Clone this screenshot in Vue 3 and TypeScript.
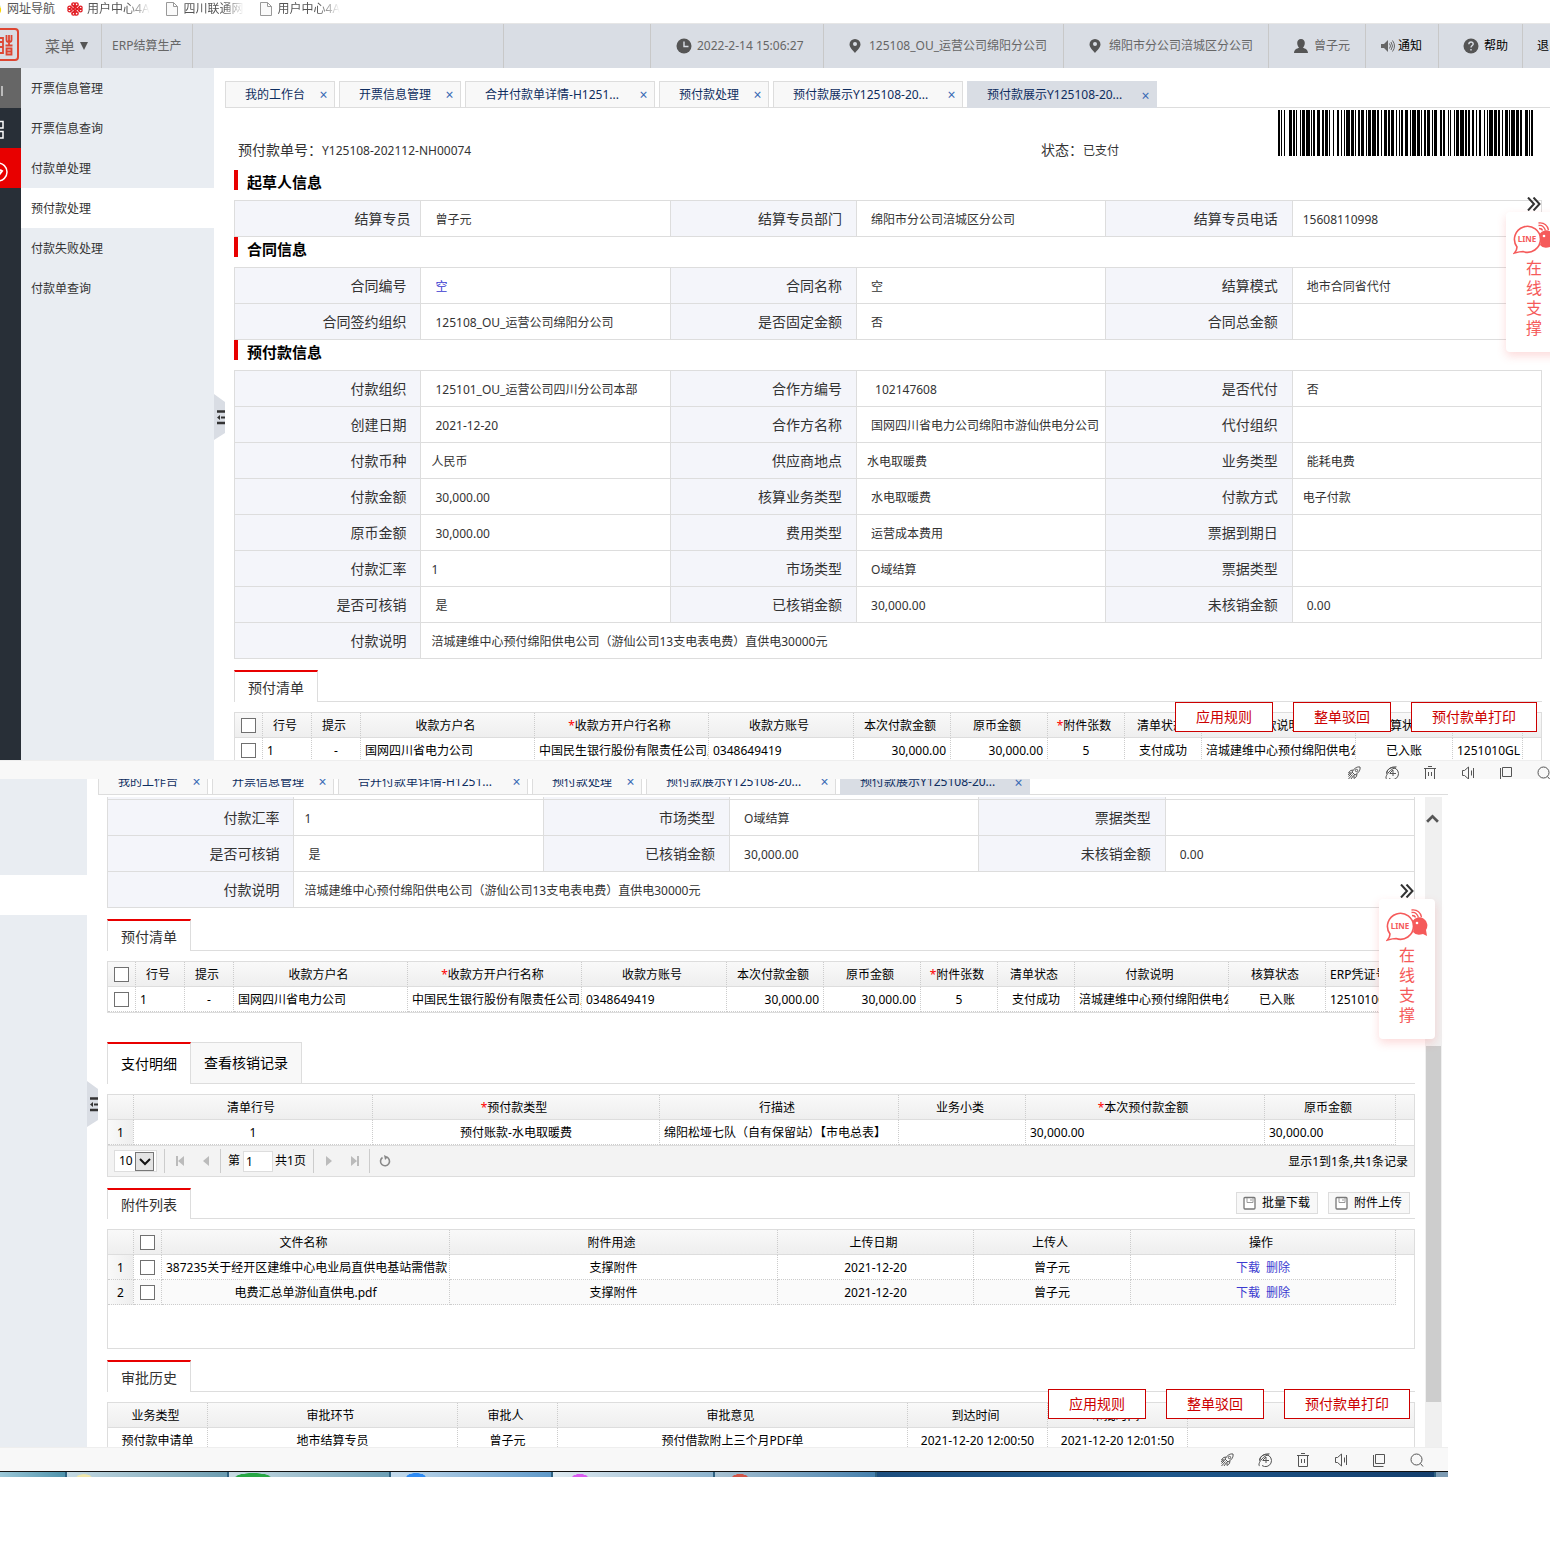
<script setup lang="ts">
interface Field {
  label: string
  value: string
  indent?: 'near' | 'far'
  labelNear?: boolean
  link?: boolean
  wide?: boolean
}
interface Column {
  title: string
  width?: number
  align?: 'left' | 'right' | 'center'
  required?: boolean
  kind?: 'check' | 'number' | 'links' | 'filler'
}
interface GridSection {
  key: string
  tabs: string[]
  tall?: boolean
  compact?: boolean
  buttons?: string[]
  pager?: boolean
  room?: boolean
  columns: Column[]
  rows: string[][]
}
interface Block {
  title?: string
  rows: Field[][]
}
interface Pane {
  key: string
  menu: { text: string; active?: boolean }[]
  blocks: Block[]
  sections: GridSection[]
}

const bookmarks = [
  { icon: 'bee', text: '网址导航' },
  { icon: 'knot', text: '用户中心4A', fade: true },
  { icon: 'doc', text: '四川联通网', fade: true },
  { icon: 'doc', text: '用户中心4A', fade: true },
]

const openTabs = ['我的工作台', '开票信息管理', '合并付款单详情-H1251...', '预付款处理', '预付款展示Y125108-20...', '预付款展示Y125108-20...']

const menu = [
  { text: '开票信息管理' },
  { text: '开票信息查询' },
  { text: '付款单处理' },
  { text: '预付款处理', active: true },
  { text: '付款失败处理' },
  { text: '付款单查询' },
]

const closing: Field[][] = [
  [{ label: '付款汇率', value: '1', indent: 'near' }, { label: '市场类型', value: 'O域结算' }, { label: '票据类型', value: '' }],
  [{ label: '是否可核销', value: '是' }, { label: '已核销金额', value: '30,000.00' }, { label: '未核销金额', value: '0.00' }],
  [{ label: '付款说明', value: '涪城建维中心预付绵阳供电公司（游仙公司13支电表电费）直供电30000元', indent: 'near', wide: true }],
]

const blocks: Block[] = [
  {
    title: '起草人信息',
    rows: [[{ label: '结算专员', value: '曾子元', labelNear: true }, { label: '结算专员部门', value: '绵阳市分公司涪城区分公司' }, { label: '结算专员电话', value: '15608110998', indent: 'near' }]],
  },
  {
    title: '合同信息',
    rows: [
      [{ label: '合同编号', value: '空', link: true }, { label: '合同名称', value: '空' }, { label: '结算模式', value: '地市合同省代付' }],
      [{ label: '合同签约组织', value: '125108_OU_运营公司绵阳分公司' }, { label: '是否固定金额', value: '否' }, { label: '合同总金额', value: '' }],
    ],
  },
  {
    title: '预付款信息',
    rows: [
      [{ label: '付款组织', value: '125101_OU_运营公司四川分公司本部' }, { label: '合作方编号', value: '102147608', indent: 'far' }, { label: '是否代付', value: '否' }],
      [{ label: '创建日期', value: '2021-12-20' }, { label: '合作方名称', value: '国网四川省电力公司绵阳市游仙供电分公司' }, { label: '代付组织', value: '' }],
      [{ label: '付款币种', value: '人民币', indent: 'near' }, { label: '供应商地点', value: '水电取暖费', indent: 'near' }, { label: '业务类型', value: '能耗电费' }],
      [{ label: '付款金额', value: '30,000.00' }, { label: '核算业务类型', value: '水电取暖费' }, { label: '付款方式', value: '电子付款', indent: 'near' }],
      [{ label: '原币金额', value: '30,000.00' }, { label: '费用类型', value: '运营成本费用' }, { label: '票据到期日', value: '' }],
      ...closing,
    ],
  },
]

const listSection: GridSection = {
  key: 'list',
  tabs: ['预付清单'],
  columns: [
    { title: '', width: 28, kind: 'check' },
    { title: '行号', width: 49, align: 'left' },
    { title: '提示', width: 49 },
    { title: '收款方户名', width: 174, align: 'left' },
    { title: '收款方开户行名称', width: 174, align: 'left', required: true },
    { title: '收款方账号', width: 145, align: 'left' },
    { title: '本次付款金额', width: 97, align: 'right' },
    { title: '原币金额', width: 97, align: 'right' },
    { title: '附件张数', width: 77, required: true },
    { title: '清单状态', width: 77 },
    { title: '付款说明', width: 154, align: 'left' },
    { title: '核算状态', width: 97 },
    { title: 'ERP凭证号', width: 70, align: 'left' },
    { title: '', kind: 'filler' },
  ],
  rows: [['', '1', '-', '国网四川省电力公司', '中国民生银行股份有限责任公司成都', '0348649419', '30,000.00', '30,000.00', '5', '支付成功', '涪城建维中心预付绵阳供电公司', '已入账', '1251010GL', '']],
}

const detailSection: GridSection = {
  key: 'detail',
  tabs: ['支付明细', '查看核销记录'],
  tall: true,
  pager: true,
  columns: [
    { title: '', width: 26, kind: 'number' },
    { title: '清单行号', width: 239 },
    { title: '预付款类型', width: 287, required: true },
    { title: '行描述', width: 239, align: 'left' },
    { title: '业务小类', width: 127 },
    { title: '本次预付款金额', width: 239, align: 'left', required: true },
    { title: '原币金额', width: 131, align: 'left' },
    { title: '', kind: 'filler' },
  ],
  rows: [['1', '1', '预付账款-水电取暖费', '绵阳松垭七队（自有保留站）【市电总表】', '', '30,000.00', '30,000.00', '']],
}

const fileSection: GridSection = {
  key: 'files',
  tabs: ['附件列表'],
  compact: true,
  buttons: ['批量下载', '附件上传'],
  room: true,
  columns: [
    { title: '', width: 26, kind: 'number' },
    { title: '', width: 28, kind: 'check' },
    { title: '文件名称', width: 288 },
    { title: '附件用途', width: 328 },
    { title: '上传日期', width: 196 },
    { title: '上传人', width: 157 },
    { title: '操作', width: 265, kind: 'links' },
    { title: '', kind: 'filler' },
  ],
  rows: [
    ['1', '', '387235关于经开区建维中心电业局直供电基站需借款', '支撑附件', '2021-12-20', '曾子元', '', ''],
    ['2', '', '电费汇总单游仙直供电.pdf', '支撑附件', '2021-12-20', '曾子元', '', ''],
  ],
}

const historySection: GridSection = {
  key: 'history',
  tabs: ['审批历史'],
  columns: [
    { title: '业务类型', width: 100 },
    { title: '审批环节', width: 250 },
    { title: '审批人', width: 100 },
    { title: '审批意见', width: 350 },
    { title: '到达时间', width: 140 },
    { title: '审批时间', width: 140 },
    { title: '', kind: 'filler' },
  ],
  rows: [['预付款申请单', '地市结算专员', '曾子元', '预付借款附上三个月PDF单', '2021-12-20 12:00:50', '2021-12-20 12:01:50', '']],
}

const panes: Pane[] = [
  { key: 'upper', menu, blocks, sections: [listSection] },
  { key: 'lower', menu: [], blocks: [{ rows: closing }], sections: [listSection, detailSection, fileSection, historySection] },
]

const actions = ['应用规则', '整单驳回', '预付款单打印']
const statusIcons = ['rocket', 'boost', 'trash', 'sound', 'windows', 'search']
const taskButtons = ['folder', 'green', 'blue', 'violet', 'red']

/* Code 128 module widths of Y125108-202112-NH00074 */
const codeWidths = [
  '211214', '312113', '113141', '112232', '213113', '132212', '114131', '122132',
  '113141', '221231', '213212', '112232', '114131', '122132', '113321', '231113',
  '113141', '212222', '122312', '114131', '221231', '114131', '2331112',
].join('')

function barPath(widths: string): string {
  let x = 0
  let d = ''
  widths.split('').forEach((w, i) => {
    const n = Number(w)
    if (i % 2 === 0) d += `M${x} 0h${n}v46h-${n}z`
    x += n
  })
  return d
}
const bars = barPath(codeWidths)
</script>

<template>
  <div class="page">
    <svg class="sprite" aria-hidden="true">
      <symbol id="i-bee" viewBox="0 0 16 16"><circle cx="9" cy="9" r="6" fill="#fbd400" /><path d="M8 1Q13 1 14 5l-2 2-5-1z" fill="#3c9b35" /></symbol>
      <symbol id="i-knot" viewBox="0 0 16 14">
        <g fill="none" stroke="#e11b22" stroke-width="1.3">
          <circle cx="6.500" cy="2.500" r="1.700" /><circle cx="9.500" cy="2.500" r="1.700" /><circle cx="6.500" cy="11.500" r="1.700" /><circle cx="9.500" cy="11.500" r="1.700" />
          <circle cx="2.500" cy="5.800" r="1.600" /><circle cx="2.500" cy="8.200" r="1.600" /><circle cx="13.500" cy="5.800" r="1.600" /><circle cx="13.500" cy="8.200" r="1.600" />
          <path d="M3 4l8 7M5 2.500l8 7M3 10l8-7M5 11.500l8-7" /><circle cx="8" cy="7" r="1.500" />
        </g>
      </symbol>
      <symbol id="i-doc" viewBox="0 0 12 14"><path d="M.5.5h7l4 4v9H.5zM7.500.5v4h4" fill="#fafafa" stroke="#999" /></symbol>
      <symbol id="i-clock" viewBox="0 0 16 16"><circle cx="8" cy="8" r="7.500" fill="#555" /><path d="M8 3.500V8.500h4.500" fill="none" stroke="#d9dde4" stroke-width="1.400" /></symbol>
      <symbol id="i-pin" viewBox="0 0 12 16"><path d="M6 1a5.500 5.500 0 0 1 5.500 5.500c0 3-3.500 6-5.500 8.500C4 12.500.5 9.500.5 6.500A5.500 5.500 0 0 1 6 1z" fill="#555" /><circle cx="6" cy="6" r="2" fill="#d9dde4" /></symbol>
      <symbol id="i-user" viewBox="0 0 16 16"><path d="M8 1c2.500 0 3.800 1.700 3.800 4S10.500 9.300 9.800 9.800c2.500.8 5 1.700 5.200 5.200H1c.2-3.500 2.700-4.400 5.200-5.200C5.500 9.300 4.200 7.300 4.200 5S5.500 1 8 1z" fill="#555" /></symbol>
      <symbol id="i-notice" viewBox="0 0 14 12"><path d="M0 4h3l4-4v12L3 8H0z" fill="#666" /><path d="M8.500 3.500q2 2.500 0 5M10 2q3 4 0 8M11.500.5q4 5.500 0 11" fill="none" stroke="#666" /></symbol>
      <symbol id="i-help" viewBox="0 0 16 16"><circle cx="8" cy="8" r="7.500" fill="#555" /><path d="M5.800 6.200Q6 4 8 4t2.200 2c0 1.500-2.200 1.600-2.200 3.400M8 11v1.500" fill="none" stroke="#d9dde4" stroke-width="1.400" /></symbol>
      <symbol id="i-handle" viewBox="0 0 11 46"><path d="M0 0l11 8v31L0 46z" fill="#d9dde4" /><path d="M3 17.500h8M3 29h8" stroke="#333" stroke-width="2.500" /><path d="M7 23.500h4" stroke="#333" stroke-width="2" /><path d="M6 21v5l-3-2.500z" fill="#333" /></symbol>
      <symbol id="i-more" viewBox="0 0 14 14"><path d="M1 .5l6 6.500-6 6.500M6.500.5l6 6.500-6 6.500" fill="none" stroke="#333" stroke-width="2" /></symbol>
      <symbol id="i-rocket" viewBox="0 0 14 14"><path d="M13 1C10 .5 7.500 2 5 6l3 3c4-2.500 5.500-5 5-8zM6.500 4L3.500 4.500 1.500 7H5M10 7.500L9.500 10.500 7 12.500V9M4.500 7.500l-3 3M5.500 8.500l-4 4.500M6.500 9.500L4 13M3.500 7L1 9" fill="none" stroke="#555" /><circle cx="9.500" cy="4.500" r="1.200" fill="none" stroke="#555" /></symbol>
      <symbol id="i-boost" viewBox="0 0 14 14"><path d="M4 12.500A6 6 0 1 0 1.500 7.500M1.500 13C-.5 11.500 3 4.500 10.500 1.500M11.500.8Q3 .5 1.500 7.500M8 4v6M5 7.500h6M8 4L4.500 7.500" fill="none" stroke="#555" /></symbol>
      <symbol id="i-trash" viewBox="0 0 14 14"><path d="M1 2.500h12M5 .5h4M2.500 2.500v11h9v-11M5.500 6v4M8.500 6v4" fill="none" stroke="#555" /></symbol>
      <symbol id="i-sound" viewBox="0 0 14 14"><path d="M1.500 4.500h2L7.500 1v12L3.500 9.500h-2zM10.500 4.500v5M12.500 2v10" fill="none" stroke="#555" /></symbol>
      <symbol id="i-windows" viewBox="0 0 14 14"><path d="M3.500 1.500h9v9h-9zM1.500 2v11.500h10" fill="none" stroke="#555" /></symbol>
      <symbol id="i-search" viewBox="0 0 14 14"><path d="M10.500 10.500L13 13.500" stroke="#555" /><circle cx="6.500" cy="6.500" r="5.500" fill="none" stroke="#555" /></symbol>
      <symbol id="i-disk" viewBox="0 0 14 14"><rect x="1" y="1.500" width="11" height="11.500" rx="1" fill="#fff" stroke="#777" stroke-width="1.300" /><path d="M4 2v4.500h6V2M8 3v2" fill="none" stroke="#999" /></symbol>
      <symbol id="i-support" viewBox="2 0 42 34">
        <path d="M6 25a13 13 0 1 1 6 4.500q-3 0-8.500 1.500Q6 28 6 25z" fill="none" stroke="#f55a5a" stroke-width="1.600" />
        <text x="16" y="20" font-size="8" font-weight="700" text-anchor="middle" fill="#f55a5a">LINE</text>
        <path d="M28.500 12a8 8 0 1 1 13.500 9l1 6-4-2q-7 2-10-2 2-5-.5-11z" fill="#f55a5a" /><circle cx="33" cy="14" r="1.300" fill="#fff" />
        <path d="M27.500 3.500q5-1 7 5M27.500 1q8-1 10 7M28 6.500q3 0 3.500 2" fill="none" stroke="#f55a5a" stroke-width="1.300" />
      </symbol>
      <symbol id="i-seal" viewBox="0 0 20 34">
        <rect x="-14" y="1" width="32" height="31" rx="3" fill="none" stroke="#dd4632" stroke-width="2" />
        <path d="M0 10h3M0 14h3M0 19h3M0 25h3M3 9v17M6.500 7v5q0 2 2.500 2t2.500-2V7M9 7v11M5.500 17.500h7M6.500 20.500h5v6h-5zM6.500 23.500h5" fill="none" stroke="#dd4632" stroke-width="1.800" />
      </symbol>
    </svg>

    <nav class="bookmarks">
      <a v-for="(b, i) in bookmarks" :key="i" href="#" :class="['bookmark', b.icon]">
        <svg><use :href="'#i-' + b.icon" /></svg><span :class="{ fade: b.fade }">{{ b.text }}</span>
      </a>
    </nav>

    <header class="topbar">
      <div class="logo"><svg><use href="#i-seal" /></svg></div>
      <button class="cell menu-button" type="button">菜单<i class="caret"></i></button>
      <div class="cell system">ERP结算生产</div>
      <div class="cell stretch"></div>
      <div class="cell blank"></div>
      <div class="cell time"><svg><use href="#i-clock" /></svg>2022-2-14 15:06:27</div>
      <div class="cell org"><svg class="slim"><use href="#i-pin" /></svg>125108_OU_运营公司绵阳分公司</div>
      <div class="cell dept"><svg class="slim"><use href="#i-pin" /></svg>绵阳市分公司涪城区分公司</div>
      <div class="cell person"><svg><use href="#i-user" /></svg>曾子元</div>
      <button class="cell notice" type="button"><svg><use href="#i-notice" /></svg>通知</button>
      <button class="cell help" type="button"><svg><use href="#i-help" /></svg>帮助</button>
      <button class="cell quit" type="button">退出</button>
    </header>

    <section v-for="pane in panes" :key="pane.key" :class="['pane', pane.key]">
      <div class="body">
        <div v-if="pane.key === 'upper'" class="rail">
          <div class="rail-item grey"><svg viewBox="0 0 21 40"><path d="M2 18v10" stroke="#bbb" stroke-width="2" /></svg></div>
          <div class="rail-item"><svg viewBox="0 0 21 40"><path d="M-4 13.500H3V20H-4zM-4 23.500H3V30H-4z" fill="none" stroke="#fff" stroke-width="1.500" /></svg></div>
          <div class="rail-item red"><svg viewBox="0 0 21 40"><circle cx="-2" cy="24" r="9" fill="none" stroke="#fff" stroke-width="1.500" /><path d="M-4 24l3 3 3-4-2-1" fill="none" stroke="#fff" stroke-width="2" /></svg></div>
        </div>
        <nav class="side">
          <a v-for="m in pane.menu" :key="m.text" href="#" :class="{ active: m.active }">{{ m.text }}</a>
          <div v-if="!pane.menu.length" class="side-gap"></div>
        </nav>
        <div class="gutter"><svg><use href="#i-handle" /></svg></div>

        <main class="main">
          <div class="tabs">
            <div v-for="(t, i) in openTabs" :key="i" :class="['tab', { current: i === 5, roomy: t.includes('...') }]">
              <span>{{ t }}</span><button type="button" :aria-label="'关闭' + t">×</button>
            </div>
          </div>
          <div class="scroller">
            <div class="content">
              <div v-if="pane.key === 'upper'" class="summary">
                <p class="order"><span>预付款单号：</span>Y125108-202112-NH00074</p>
                <p class="state"><span>状态：</span>已支付</p>
                <svg class="barcode" viewBox="0 0 255 46"><path :d="bars" /></svg>
              </div>

              <template v-for="(block, bi) in pane.blocks" :key="bi">
                <h2 v-if="block.title">{{ block.title }}</h2>
                <table :class="['fields', { cut: !block.title }]">
                  <colgroup><template v-for="n in 3" :key="n"><col class="c-label" /><col class="c-value" /></template></colgroup>
                  <tbody>
                    <tr v-if="!block.title" class="sliver"><template v-for="n in 3" :key="n"><th></th><td></td></template></tr>
                    <tr v-for="(row, ri) in block.rows" :key="ri">
                      <template v-for="f in row" :key="f.label">
                        <th scope="row" :class="{ near: f.labelNear }">{{ f.label }}</th>
                        <td :class="f.indent" :colspan="f.wide ? 5 : 1"><a v-if="f.link" href="#">{{ f.value }}</a><template v-else>{{ f.value }}</template></td>
                      </template>
                    </tr>
                  </tbody>
                </table>
              </template>

              <section v-for="s in pane.sections" :key="s.key" :class="['sheet', { tall: s.tall, compact: s.compact }]">
                <div class="strip">
                  <button v-for="(t, i) in s.tabs" :key="t" type="button" :class="['strip-tab', { on: i === 0 }]">{{ t }}</button>
                  <div v-if="s.buttons" class="tools">
                    <button v-for="b in s.buttons" :key="b" type="button"><svg><use href="#i-disk" /></svg>{{ b }}</button>
                  </div>
                </div>
                <div :class="['grid', { paged: s.pager, room: s.room }]">
                  <table>
                    <colgroup><col v-for="(c, ci) in s.columns" :key="ci" :style="c.width ? { width: c.width + 'px' } : {}" /></colgroup>
                    <thead>
                      <tr>
                        <th v-for="(c, ci) in s.columns" :key="ci" :class="c.kind">
                          <input v-if="c.kind === 'check'" type="checkbox" aria-label="全选" />
                          <template v-else><b v-if="c.required">*</b>{{ c.title }}</template>
                        </th>
                      </tr>
                    </thead>
                    <tbody>
                      <tr v-for="(r, ri) in s.rows" :key="ri">
                        <td v-for="(c, ci) in s.columns" :key="ci" :class="[c.kind, c.align]">
                          <input v-if="c.kind === 'check'" type="checkbox" aria-label="选择此行" />
                          <template v-else-if="c.kind === 'links'"><a href="#">下载</a><a href="#">删除</a></template>
                          <template v-else>{{ r[ci] }}</template>
                        </td>
                      </tr>
                    </tbody>
                  </table>
                  <div v-if="s.pager" class="pager">
                    <label class="size">
                      <select aria-label="每页条数"><option>10</option></select>
                      <svg viewBox="0 0 19 19"><rect x=".5" y=".5" width="18" height="18" fill="#e4e4e4" stroke="#777" /><path d="M5 7l5 5 5-5" fill="none" stroke="#111" stroke-width="2" /></svg>
                    </label>
                    <i class="bar"></i>
                    <button type="button" aria-label="首页"><svg viewBox="0 0 10 10"><path d="M1 0h2v10H1zM9 0v10L3 5z" /></svg></button>
                    <button type="button" aria-label="上一页"><svg viewBox="0 0 10 10"><path d="M8 0v10L2 5z" /></svg></button>
                    <i class="bar"></i>
                    <label class="goto">第<input type="text" value="1" /></label><span class="total">共1页</span>
                    <i class="bar"></i>
                    <button type="button" aria-label="下一页"><svg viewBox="0 0 10 10"><path d="M2 0v10l6-5z" /></svg></button>
                    <button type="button" aria-label="末页"><svg viewBox="0 0 10 10"><path d="M7 0h2v10H7zM1 0v10l6-5z" /></svg></button>
                    <i class="bar"></i>
                    <button type="button" aria-label="刷新"><svg class="reload" viewBox="0 0 12 12"><path d="M3.500 2.500a4.500 4.500 0 1 0 4-.5" fill="none" stroke="#888" stroke-width="1.600" /><path d="M5 0l4 2-3 3z" /></svg></button>
                    <span class="count">显示1到1条,共1条记录</span>
                  </div>
                </div>
              </section>
            </div>
            <div v-if="pane.key === 'lower'" class="scrollbar">
              <svg viewBox="0 0 12 9"><path d="M1 8l5-5 5 5" fill="none" stroke="#555" stroke-width="2.500" /></svg>
              <div class="thumb"></div>
            </div>
          </div>
        </main>

        <div class="actions"><button v-for="a in actions" :key="a" type="button">{{ a }}</button></div>
        <aside class="support">
          <svg class="more"><use href="#i-more" /></svg>
          <a href="#" class="card"><svg><use href="#i-support" /></svg><span>在线支撑</span></a>
        </aside>
      </div>
      <footer class="status"><svg v-for="s in statusIcons" :key="s"><use :href="'#i-' + s" /></svg></footer>
      <div v-if="pane.key === 'lower'" class="taskbar">
        <i class="start"></i><i v-for="t in taskButtons" :key="t" :class="['task', t]"></i><i class="rest"></i><i class="desktop"></i>
      </div>
    </section>
  </div>
</template>

<style>
body { margin: 0; background: #fff; }
</style>

<style scoped>
.page { font: 12px/18px "Noto Sans", "Noto Sans CJK SC", sans-serif; color: #333; overflow: hidden; }
.page * { box-sizing: border-box; }
.sprite { position: absolute; width: 0; height: 0; }
a { text-decoration: none; color: inherit; }
button, input, select { font: inherit; color: inherit; }
button { border: 0; padding: 0; background: none; white-space: nowrap; }
p, h2 { margin: 0; }
svg { display: block; flex: none; }

.bookmarks { display: flex; height: 24px; border-bottom: 1px solid #e6e6e6; color: #555; }
.bookmark { display: flex; align-items: center; gap: 4px; height: 18px; margin-right: 16px; white-space: nowrap; }
.bookmark svg { width: 16px; height: 14px; }
.bookmark.bee { margin-left: -13px; margin-right: 12px; }
.bookmark.doc svg { width: 12px; }
.bookmark.doc { gap: 6px; }
.bookmark .fade { -webkit-mask-image: linear-gradient(90deg, #000 65%, transparent); mask-image: linear-gradient(90deg, #000 65%, transparent); }

.topbar { display: flex; height: 44px; background: #d9dde4; color: #666; overflow: hidden; }
.logo { width: 25px; flex: none; }
.logo svg { width: 20px; height: 34px; margin-top: 4px; }
.cell { display: flex; align-items: center; flex: none; border-right: 1px solid #c8c8c8; white-space: nowrap; }
.cell svg { width: 16px; height: 16px; }
.cell svg.slim { width: 12px; }
.menu-button { width: 77px; padding-left: 20px; font-size: 15px; gap: 5px; }
.caret { border: 4px solid transparent; border-top: 8px solid #555; border-bottom: 0; }
.system { width: 91px; padding-left: 10px; }
.stretch { flex: 1 1 0; }
.blank { width: 147px; }
.time { width: 173px; padding-left: 25px; gap: 5px; }
.org { width: 240px; padding-left: 25px; gap: 8px; }
.dept { width: 205px; padding-left: 25px; gap: 8px; }
.person { width: 97px; padding-left: 24px; gap: 5px; }
.notice { width: 73px; padding-left: 15px; gap: 3px; color: #000; }
.notice svg { width: 14px; height: 12px; }
.help { width: 84px; padding-left: 24px; gap: 5px; color: #000; }
.quit { width: 27px; padding-left: 14px; border: 0; color: #000; overflow: hidden; }

.pane { overflow: hidden; }
.pane.lower { margin-right: 102px; }
.body { position: relative; display: flex; }
.rail { width: 21px; flex: none; background: #282f37; }
.rail-item { height: 40px; }
.rail-item svg { width: 21px; height: 40px; }
.grey { background: #666; }
.red { background: #e80000; }
.side { width: 193px; flex: none; background: #e9edf2; }
.side a { display: block; padding: 2px 0 0 10px; line-height: 38px; }
.side a.active { background: #fff; }
.lower .side { width: 87px; padding-top: 96px; }
.side-gap { height: 40px; background: #fff; }
.gutter { width: 11px; flex: none; padding-top: 326px; }
.lower .gutter { padding-top: 302px; }
.gutter svg { width: 11px; height: 46px; }
.main { flex: 1; min-width: 0; }

.tabs { display: flex; height: 27px; margin-top: 13px; border-bottom: 1px solid #ddd; }
.lower .tabs { margin-top: -11px; margin-bottom: 2px; }
.tab { display: flex; align-items: center; height: 26px; margin-right: 4px; padding-left: 19px; background: #f8f8f8; border: 1px solid #ddd; border-bottom: 0; color: #0e2d5f; white-space: nowrap; }
.tab button { width: 22px; margin-left: 7px; padding: 1px 0 0 1px; color: #3a6ab5; font-size: 14px; }
.tab.roomy { width: 190px; justify-content: space-between; }
.tab.current { height: 27px; background: #d9dde4; border-color: #d9dde4; }

.scroller { display: flex; }
.content { flex: 1; min-width: 0; padding: 0 8px 0 9px; }
.lower .content { padding-right: 10px; }
.summary { display: flex; height: 62px; padding: 2px 9px 0 4px; color: #333; }
.summary p { line-height: 20px; padding-top: 30px; }
.summary span { font-size: 14px; }
.order { width: 62%; }
.barcode { width: 255px; height: 46px; margin-left: auto; }
h2 { height: 30px; padding-left: 13px; font-size: 15px; line-height: 25px; color: #000; background: linear-gradient(#e80000, #e80000) no-repeat 0 0 / 4px 20px; }

.fields { width: 100%; table-layout: fixed; border-spacing: 0; border: solid #ddd; border-width: 1px 0 0 1px; }
.fields.cut { border-top: 0; }
.c-label { width: 14.25%; }
.c-value { width: 19.05%; }
.fields th, .fields td { height: 36px; padding: 0 14px; border: solid #ddd; border-width: 0 1px 1px 0; white-space: nowrap; }
.fields th { background: #f4f5fa; font-size: 14px; font-weight: 400; text-align: right; }
.fields th.near { padding-right: 10px; }
.fields td { padding-right: 0; padding-top: 2px; }
.fields td.near { padding-left: 10px; }
.fields td.far { padding-left: 18px; }
.fields .sliver th, .fields .sliver td { height: 3px; padding: 0; }
.fields td a { color: #3b3bd0; }

.sheet { margin-top: 11px; }
.sheet.tall { margin-top: 29px; }
.strip { display: flex; height: 32px; margin-bottom: 10px; border-bottom: 1px solid #ddd; }
.tall .strip { height: 42px; }
.compact .strip { height: 31px; }
.strip-tab { height: 41px; padding: 0 13px; font-size: 14px; color: #000; background: #f8f8f8; border: solid #ddd; border-width: 1px 1px 0 0; }
.strip-tab.on { height: 32px; padding-top: 2px; background: #fff; color: #333; border: 1px solid #ddd; border-width: 2px 1px 0; border-top-color: #e80000; }
.tall .strip-tab.on { height: 42px; padding-top: 0; color: #000; }
.compact .strip-tab.on { height: 31px; padding-top: 0; }
.tools { display: flex; gap: 10px; margin: 4px 5px 0 auto; }
.tools button { display: flex; align-items: center; gap: 5px; height: 22px; padding: 0 7px 0 6px; border: 1px solid #ddd; background: #f8f8f8; color: #000; }
.tools svg { width: 14px; height: 14px; }

.grid { border: 1px solid #ddd; color: #000; }
.grid.paged { border-bottom: 0; }
.grid.room { padding-bottom: 43px; }
.grid table { width: 100%; table-layout: fixed; border-spacing: 0; }
.grid th, .grid td { height: 25px; padding: 2px 4px 0; text-align: center; font-weight: 400; white-space: nowrap; overflow: hidden; line-height: 18px; border-right: 1px dotted #ccc; border-bottom: 1px dotted #ccc; }
.grid thead tr { background: linear-gradient(#f9f9f9, #eee); }
.grid th { padding-right: 8px; border-bottom: 1px solid #ddd; }
.grid th b { color: #f00; font-weight: 400; }
.grid tbody tr:nth-child(2) { background: #fafafa; }
.grid td.left { text-align: left; }
.grid td.right { text-align: right; }
.grid td.number { background: linear-gradient(90deg, #f9f9f9, #eee); }
.grid th.filler, .grid td.filler { border-right: 0; }
.grid td.filler { border-bottom-color: transparent; background: #fff; }
.grid .check { padding: 0; }
.grid .links a { margin: 0 3px; color: #3b3bd0; }
input[type="checkbox"] { appearance: none; display: block; width: 15px; height: 15px; margin: 0 auto; border: 1px solid #707070; background: #fff; }

.pager { display: flex; align-items: center; height: 32px; padding: 0 6px; background: #f3f3f3; border: solid #ddd; border-width: 1px 0; }
.size { display: flex; align-items: center; width: 43px; height: 22px; background: #fff; border: 1px solid #ddd; }
.size select { appearance: none; width: 20px; height: 18px; padding: 0 0 0 4px; border: 0; background: none; }
.size svg { width: 19px; height: 19px; }
.bar { width: 1px; height: 24px; margin: 0 7px; background: #ccc; }
.pager button { width: 26px; height: 26px; display: grid; place-items: center; }
.pager button + button { margin-right: -6px; }
.bar + button { margin-left: -5px; }
.pager button svg { width: 10px; height: 10px; fill: #bbb; }
.pager button svg.reload { width: 12px; height: 12px; fill: #888; }
.goto { display: flex; align-items: center; gap: 3px; }
.goto input { width: 30px; height: 21px; padding: 0 2px; border: 1px solid #ddd; background: #fff; }
.total { padding-left: 2px; }
.count { margin-left: auto; padding-top: 2px; }

.scrollbar { width: 17px; margin-right: 6px; padding: 16px 1px 0; background: #f0f0f0; }
.scrollbar svg { width: 13px; height: 10px; }
.thumb { height: 356px; margin-top: 223px; background: #cdcdcd; }

.actions { position: absolute; right: 13px; bottom: 32px; display: flex; gap: 20px; }
.lower .actions { right: 38px; bottom: 35px; }
.actions button { height: 30px; padding: 0 20px; border: 1px solid #c00; background: #fff; color: #c00; font-size: 14px; }
.support { position: absolute; top: 129px; right: -12px; width: 56px; }
.lower .support { top: 105px; right: 13px; }
.more { width: 14px; height: 14px; margin: 0 auto 1px; }
.card { display: flex; flex-direction: column; align-items: center; height: 140px; padding-top: 10px; border-radius: 4px; background: #fff; box-shadow: 0 4px 10px rgba(245, 90, 90, .22); color: #f55a5a; }
.card svg { width: 42px; height: 34px; margin-bottom: 2px; }
.card span { width: 16px; font-size: 16px; line-height: 20px; white-space: normal; word-break: break-all; }

.status { position: relative; display: flex; justify-content: flex-end; gap: 24px; height: 19px; margin-top: -4px; padding: 5px 0 0; background: #f8f8f8; border-top: 1px solid #eee; overflow: hidden; }
.status svg { width: 14px; height: 14px; }
.upper .status { margin-right: -1px; }
.lower .status { height: 24px; margin-top: -7px; padding-right: 24px; }
.taskbar { display: flex; height: 6px; gap: 2px; background: #2f6281; border-top: 1px solid #111; }
.taskbar i { flex: none; }
.start { width: 65px; background: linear-gradient(90deg, #9cc8d8, #4f93ac); }
.task { width: 160px; background: linear-gradient(90deg, #cfdfe6, #6f9fb4); }
.task.folder { background: radial-gradient(ellipse 8px 3px at 17px 5px, #f0e6a8 80%, transparent), linear-gradient(90deg, #c5dae3, #6c9cb0); }
.task.green { background: radial-gradient(ellipse 18px 4px at 24px 5px, #28a745 90%, transparent), linear-gradient(90deg, #c9dbe3, #6d9fb5); }
.task.blue { background: radial-gradient(ellipse 10px 4px at 25px 5px, #2f8cf5 90%, transparent), linear-gradient(90deg, #c5dbec, #5f99c9); }
.task.violet { background: radial-gradient(ellipse 8px 3px at 27px 5px, #d95cf0 90%, transparent), linear-gradient(90deg, #dfeaf0, #8db3cd); }
.task.red { background: radial-gradient(ellipse 8px 3px at 25px 5px, #d05548 90%, transparent), linear-gradient(90deg, #a9c2d2, #4680ad); }
.taskbar .rest { flex: 1; background: linear-gradient(90deg, #1d4f7f, #205a8e 50%, #143f6e); }
.desktop { width: 12px; background: #7d9bb3; }
</style>
